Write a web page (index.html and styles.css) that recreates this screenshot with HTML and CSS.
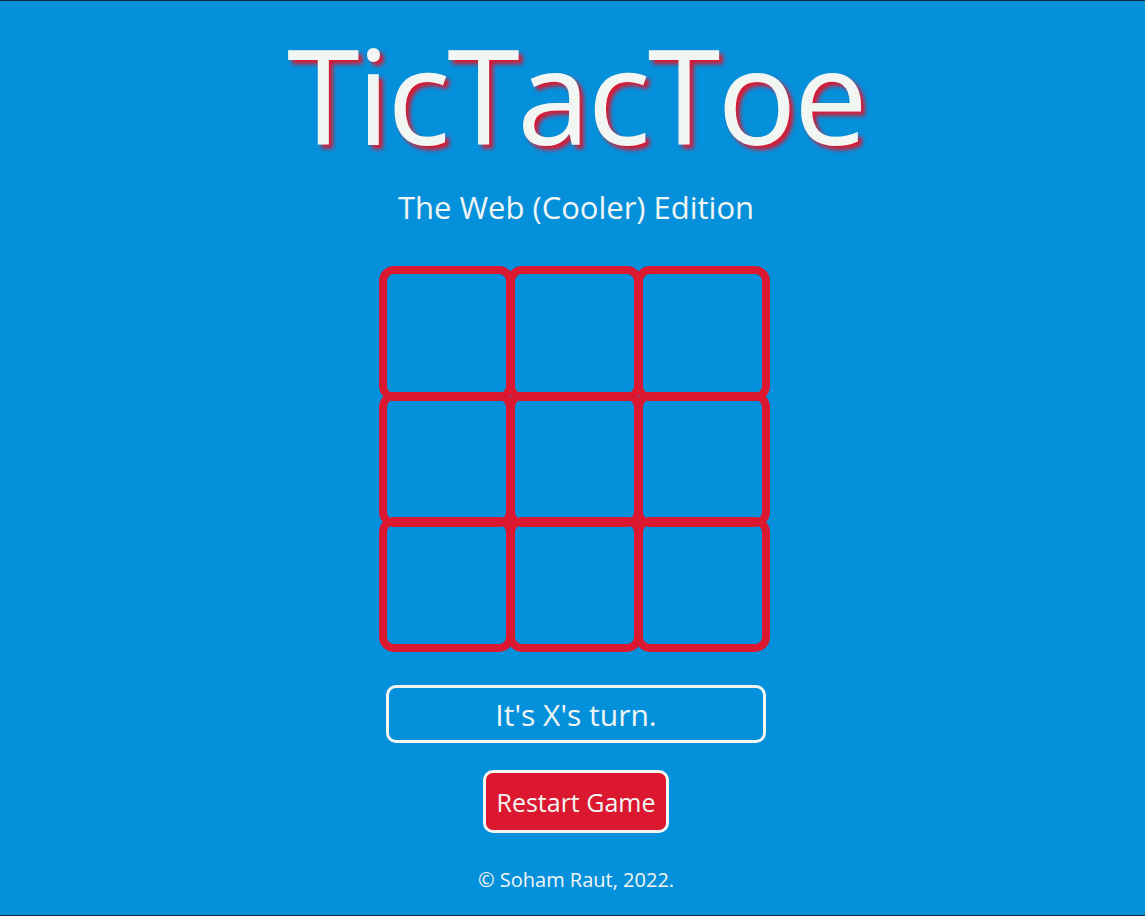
FILE: index.html
```html
<!DOCTYPE html>
<html lang="en">
<head>
<meta charset="utf-8">
<title>TicTacToe</title>
<link rel="stylesheet" href="styles.css">
</head>
<body>
<main class="page">
  <h1 class="title">TicTacToe</h1>
  <h2 class="subtitle">The Web (Cooler) Edition</h2>
  <div class="board">
    <div class="cell"></div><div class="cell"></div><div class="cell"></div>
    <div class="cell"></div><div class="cell"></div><div class="cell"></div>
    <div class="cell"></div><div class="cell"></div><div class="cell"></div>
  </div>
  <div class="status">It's X's turn.</div>
  <button class="restart">Restart Game</button>
  <footer class="footer">© Soham Raut, 2022.</footer>
</main>
</body>
</html>
```
FILE: styles.css
```css
html, body {
  margin: 0;
  padding: 0;
  height: 100%;
}
body {
  background: #0590db;
  border-top: 1px solid #1c2a33;
  border-bottom: 1px solid #1c2a33;
  box-sizing: border-box;
  font-family: "Open Sans", "Noto Sans", sans-serif;
  color: #f1f6f3;
}
.page {
  display: flex;
  flex-direction: column;
  align-items: center;
  padding-left: 7px;
}
.title {
  margin: 11px 0 0;
  font-size: 132px;
  font-weight: 400;
  line-height: 164px;
  letter-spacing: -3px;
  text-shadow: 4px 4px 4px #dc1730;
}
.subtitle {
  margin: 11px 0 0;
  font-size: 31px;
  font-weight: 400;
  line-height: 40px;
}
.board {
  margin-top: 39px;
  display: grid;
  grid-template-columns: repeat(3, 128px);
  grid-template-rows: repeat(3, 125.5px);
  width: 391px;
  height: 386px;
  margin-left: -4px;
}
.cell {
  width: 135px;
  height: 135px;
  box-sizing: border-box;
  border: 8.5px solid #dc1730;
  border-radius: 15px;
}
.status {
  margin-top: 33px;
  width: 380px;
  height: 58px;
  box-sizing: border-box;
  border: 3px solid #f1f6f3;
  border-radius: 10px;
  display: flex;
  align-items: center;
  justify-content: center;
  font-size: 30px;
}
.restart {
  margin-top: 27px;
  width: 186px;
  height: 63px;
  box-sizing: border-box;
  background: #dc1730;
  border: 3px solid #f1f6f3;
  border-radius: 10px;
  color: #f1f6f3;
  font-family: inherit;
  font-size: 25px;
  padding: 0;
}
.footer {
  margin-top: 34px;
  font-size: 20px;
  line-height: 26px;
}
```
